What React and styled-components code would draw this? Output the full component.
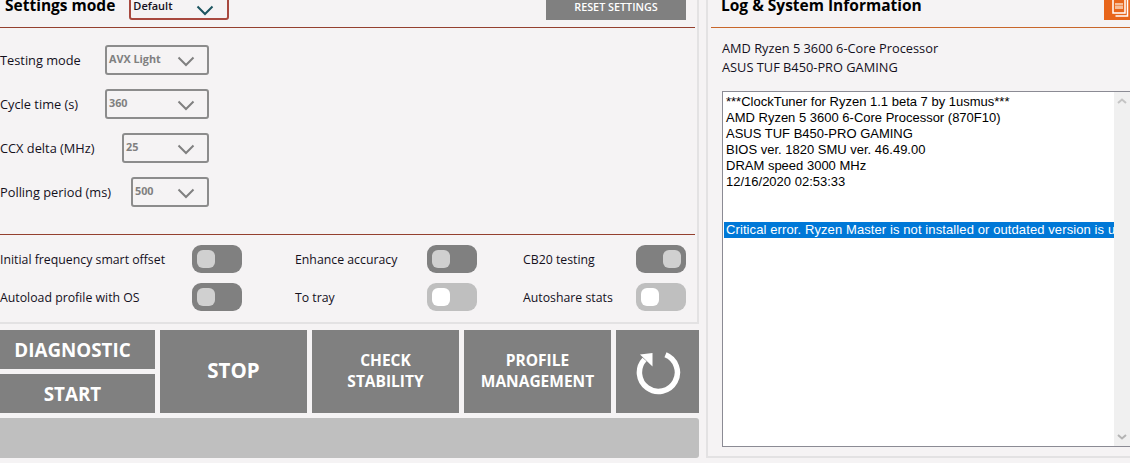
import React from 'react';
import styled, { createGlobalStyle } from 'styled-components';

const settingRows = [
  { label: 'Testing mode', value: 'AVX Light', width: 104 },
  { label: 'Cycle time (s)', value: '360', width: 104 },
  { label: 'CCX delta (MHz)', value: '25', width: 87 },
  { label: 'Polling period (ms)', value: '500', width: 78 },
];

const toggles = [
  { label: 'Initial frequency smart offset', labelWidth: 192 },
  { label: 'Enhance accuracy', labelWidth: 132 },
  { label: 'CB20 testing', labelWidth: 113, on: true },
  { label: 'Autoload profile with OS', labelWidth: 192 },
  { label: 'To tray', labelWidth: 132, disabled: true },
  { label: 'Autoshare stats', labelWidth: 113, disabled: true },
];

const logLines = [
  '***ClockTuner for Ryzen 1.1 beta 7 by 1usmus***',
  'AMD Ryzen 5 3600 6-Core Processor (870F10)',
  'ASUS TUF B450-PRO GAMING',
  'BIOS ver. 1820 SMU ver. 46.49.00',
  'DRAM speed 3000 MHz',
  '12/16/2020 02:53:33',
  '\u00a0',
  '\u00a0',
];

const Chevron = ({ color }) => (
  <svg width="18" height="11" viewBox="0 0 18 11" fill="none">
    <path d="M1.5 1.5L9 9L16.5 1.5" stroke={color} strokeWidth="2" />
  </svg>
);

const App = () => {
  return (
    <Page>
      <GlobalStyle />
      <LeftColumn>
        <SettingsPanel>
          <Header>
            <Title>Settings mode</Title>
            <ModeSelect>
              <ModeValue>Default</ModeValue>
              <Chevron color="#1d5560" />
            </ModeSelect>
            <ResetButton>RESET SETTINGS</ResetButton>
          </Header>
          <SettingsList>
            {settingRows.map((row) => (
              <SettingRow key={row.label}>
                <span>{row.label}</span>
                <Select $width={row.width}>
                  <SelectValue>{row.value}</SelectValue>
                  <Chevron color="#808080" />
                </Select>
              </SettingRow>
            ))}
          </SettingsList>
          <ToggleGrid>
            {toggles.map((item) => (
              <ToggleItem key={item.label} $labelWidth={item.labelWidth}>
                <span>{item.label}</span>
                <Toggle $on={item.on} $disabled={item.disabled}>
                  <Knob $disabled={item.disabled} />
                </Toggle>
              </ToggleItem>
            ))}
          </ToggleGrid>
        </SettingsPanel>
        <Actions>
          <StackedActions>
            <StackedButton>DIAGNOSTIC</StackedButton>
            <StackedButton>START</StackedButton>
          </StackedActions>
          <ActionButton $size={20.5}>STOP</ActionButton>
          <ActionButton>CHECK<br />STABILITY</ActionButton>
          <ActionButton>PROFILE<br />MANAGEMENT</ActionButton>
          <RefreshButton>
            <svg width="46" height="46" viewBox="0 0 46 46" fill="none">
              <path d="M30.5 5.8A19 19 0 1 1 9.5 10.5" stroke="#fff" strokeWidth="5.5" />
              <path d="M5 5.5L17.5 4V17.5Z" fill="#fff" />
            </svg>
          </RefreshButton>
        </Actions>
        <ProgressBar />
      </LeftColumn>
      <LogPanel>
        <LogHeader>
          <Title>Log &amp; System Information</Title>
          <CopyButton>
            <svg width="26" height="20" viewBox="0 0 26 20" fill="none">
              <path d="M21 0V13H9V0" stroke="#fff" strokeWidth="1.5" />
              <path d="M23.5 0V16H11.5" stroke="#fff" strokeWidth="1.5" />
              <rect x="11" y="3" width="8" height="6" fill="#f6bd98" />
              <rect x="11" y="5" width="8" height="1" fill="#e8651a" opacity="0.5" />
            </svg>
          </CopyButton>
        </LogHeader>
        <SystemInfo>
          <div>AMD Ryzen 5 3600 6-Core Processor</div>
          <div>ASUS TUF B450-PRO GAMING</div>
        </SystemInfo>
        <LogBox>
          <LogText>
            {logLines.map((line, i) => (
              <div key={i}>{line}</div>
            ))}
            <SelectedLine>Critical error. Ryzen Master is not installed or outdated version is used</SelectedLine>
          </LogText>
          <Scrollbar>
            <svg width="10" height="6" viewBox="0 0 10 6" fill="none">
              <path d="M1 5L5 1.5L9 5" stroke="#c4c4c4" strokeWidth="2" />
            </svg>
            <svg width="10" height="6" viewBox="0 0 10 6" fill="none">
              <path d="M1 1L5 4.5L9 1" stroke="#b4b4b4" strokeWidth="2" />
            </svg>
          </Scrollbar>
        </LogBox>
      </LogPanel>
    </Page>
  );
};

const GlobalStyle = createGlobalStyle`
  html, body {
    margin: 0;
    padding: 0;
    background: #f5f3f4;
  }
`;

const Page = styled.div`
  width: 1130px;
  height: 463px;
  overflow: hidden;
  display: flex;
  gap: 7px;
  font-family: 'Open Sans', 'Noto Sans', sans-serif;
  font-size: 12.3px;
  color: #14101c;
  background: #f5f3f4;
`;

const LeftColumn = styled.div`
  width: 699px;
  flex: none;
  display: flex;
  flex-direction: column;
`;

const SettingsPanel = styled.div`
  height: 324px;
  box-sizing: border-box;
  border-right: 2px solid #e3e2e3;
  border-bottom: 2px solid #e3e2e3;
`;

const Header = styled.div`
  height: 28px;
  box-sizing: border-box;
  width: 695px;
  border-bottom: 1px solid #94402e;
  display: flex;
  align-items: flex-end;
  padding: 0 0 7px 5px;
`;

const Title = styled.div`
  font-size: 15.5px;
  font-weight: 700;
  line-height: 20px;
  margin-bottom: 5px;
  color: #000;
`;

const ModeSelect = styled.div`
  width: 100px;
  height: 30px;
  box-sizing: border-box;
  margin-left: 14px;
  border: 2px solid #a8493f;
  border-radius: 3px;
  display: flex;
  align-items: flex-end;
  padding: 0 13px 2px 2px;
  justify-content: space-between;
`;

const ModeValue = styled.span`
  font-size: 11px;
  font-weight: 600;
  line-height: 15px;
  margin-bottom: 3px;
`;

const ResetButton = styled.div`
  margin-left: auto;
  margin-right: 9px;
  width: 140px;
  height: 30px;
  box-sizing: border-box;
  background: #808080;
  color: #fff;
  font-size: 10.8px;
  font-weight: 600;
  display: flex;
  align-items: flex-end;
  justify-content: center;
  line-height: 20px;
  padding-bottom: 3px;
`;

const SettingsList = styled.div`
  height: 207px;
  width: 695px;
  box-sizing: border-box;
  border-bottom: 1px solid #94402e;
  padding-top: 17px;
  display: flex;
  flex-direction: column;
  gap: 14px;
  font-size: 12.8px;
`;

const SettingRow = styled.div`
  width: 209px;
  height: 30px;
  display: flex;
  align-items: center;
  justify-content: space-between;
`;

const Select = styled.div`
  width: ${(props) => props.$width}px;
  height: 30px;
  box-sizing: border-box;
  border: 2px solid #8c8c8c;
  border-radius: 3px;
  display: flex;
  align-items: center;
  justify-content: space-between;
  padding: 0 12px 0 2px;

  svg {
    margin-top: 2px;
  }
`;

const SelectValue = styled.span`
  font-size: 10.8px;
  font-weight: 700;
  color: #808080;
  margin-bottom: 4px;
`;

const ToggleGrid = styled.div`
  display: grid;
  grid-template-columns: 295px 228px 163px;
  grid-auto-rows: 28px;
  row-gap: 10px;
  padding-top: 10px;
`;

const ToggleItem = styled.div`
  display: flex;
  align-items: center;

  span {
    width: ${(props) => props.$labelWidth}px;
    white-space: nowrap;
  }
`;

const Toggle = styled.div`
  width: 50px;
  height: 28px;
  box-sizing: border-box;
  border-radius: 9px;
  padding: 5px;
  display: flex;
  justify-content: ${(props) => (props.$on ? 'flex-end' : 'flex-start')};
  background: ${(props) => (props.$disabled ? '#bfbfbf' : '#808080')};
`;

const Knob = styled.div`
  width: 18px;
  height: 18px;
  border-radius: 6px;
  background: ${(props) => (props.$disabled ? '#ffffff' : '#d0d0d0')};
`;

const Actions = styled.div`
  display: flex;
  gap: 5px;
  height: 83px;
  margin-top: 6px;
`;

const StackedActions = styled.div`
  width: 155px;
  display: flex;
  flex-direction: column;
  gap: 5px;
`;

const StackedButton = styled.div`
  flex: 1;
  box-sizing: border-box;
  padding-right: 10px;
  background: #808080;
  color: #fff;
  font-size: 18.8px;
  font-weight: 700;
  display: flex;
  align-items: center;
  justify-content: center;
`;

const ActionButton = styled.div`
  width: 147px;
  flex: none;
  box-sizing: border-box;
  padding-bottom: 2px;
  background: #808080;
  color: #fff;
  font-weight: 700;
  text-align: center;
  display: flex;
  align-items: center;
  justify-content: center;
  font-size: ${(props) => props.$size || 15.5}px;
  line-height: 21px;
`;

const RefreshButton = styled.div`
  flex: 1;
  background: #808080;
  display: flex;
  align-items: center;
  justify-content: center;
`;

const ProgressBar = styled.div`
  height: 40px;
  margin-top: 5px;
  background: #bfbfbf;
  border-radius: 0 3px 3px 0;
`;

const LogPanel = styled.div`
  flex: 1;
  height: 458px;
  box-sizing: border-box;
  border-left: 2px solid #e3e2e3;
  border-bottom: 2px solid #e3e2e3;
  padding-left: 3px;
  min-width: 0;
`;

const LogHeader = styled.div`
  height: 28px;
  box-sizing: border-box;
  border-bottom: 1px solid #c8662a;
  display: flex;
  align-items: flex-end;
  justify-content: space-between;
  padding: 0 0 7px 10px;
`;

const CopyButton = styled.div`
  width: 26px;
  height: 30px;
  background: #e8651a;
  display: flex;
  align-items: flex-end;
  overflow: hidden;
`;

const SystemInfo = styled.div`
  padding: 11px 0 0 11px;
  height: 63px;
  box-sizing: border-box;
  font-size: 12.8px;
  line-height: 19px;
`;

const LogBox = styled.div`
  margin-left: 11px;
  height: 356px;
  box-sizing: border-box;
  border-left: 1px solid #8b8b94;
  border-top: 1px solid #8b8b94;
  border-bottom: 1px solid #8b8b94;
  background: #fff;
  display: flex;
`;

const LogText = styled.div`
  flex: 1;
  min-width: 0;
  overflow: hidden;
  padding-top: 2px;
  font-family: 'Liberation Sans', Arial, sans-serif;
  font-size: 13px;
  line-height: 16px;
  color: #000;
  white-space: nowrap;

  > div {
    padding-left: 3px;
  }
`;

const SelectedLine = styled.div`
  margin-left: 1px;
  padding-left: 2px !important;
  background: #0078d7;
  color: #fff;
  letter-spacing: 0.1px;
`;

const Scrollbar = styled.div`
  width: 16px;
  flex: none;
  background: #f0f0f0;
  display: flex;
  flex-direction: column;
  justify-content: space-between;
  align-items: center;
  padding: 6px 0;
  box-sizing: border-box;
`;

export default App;
